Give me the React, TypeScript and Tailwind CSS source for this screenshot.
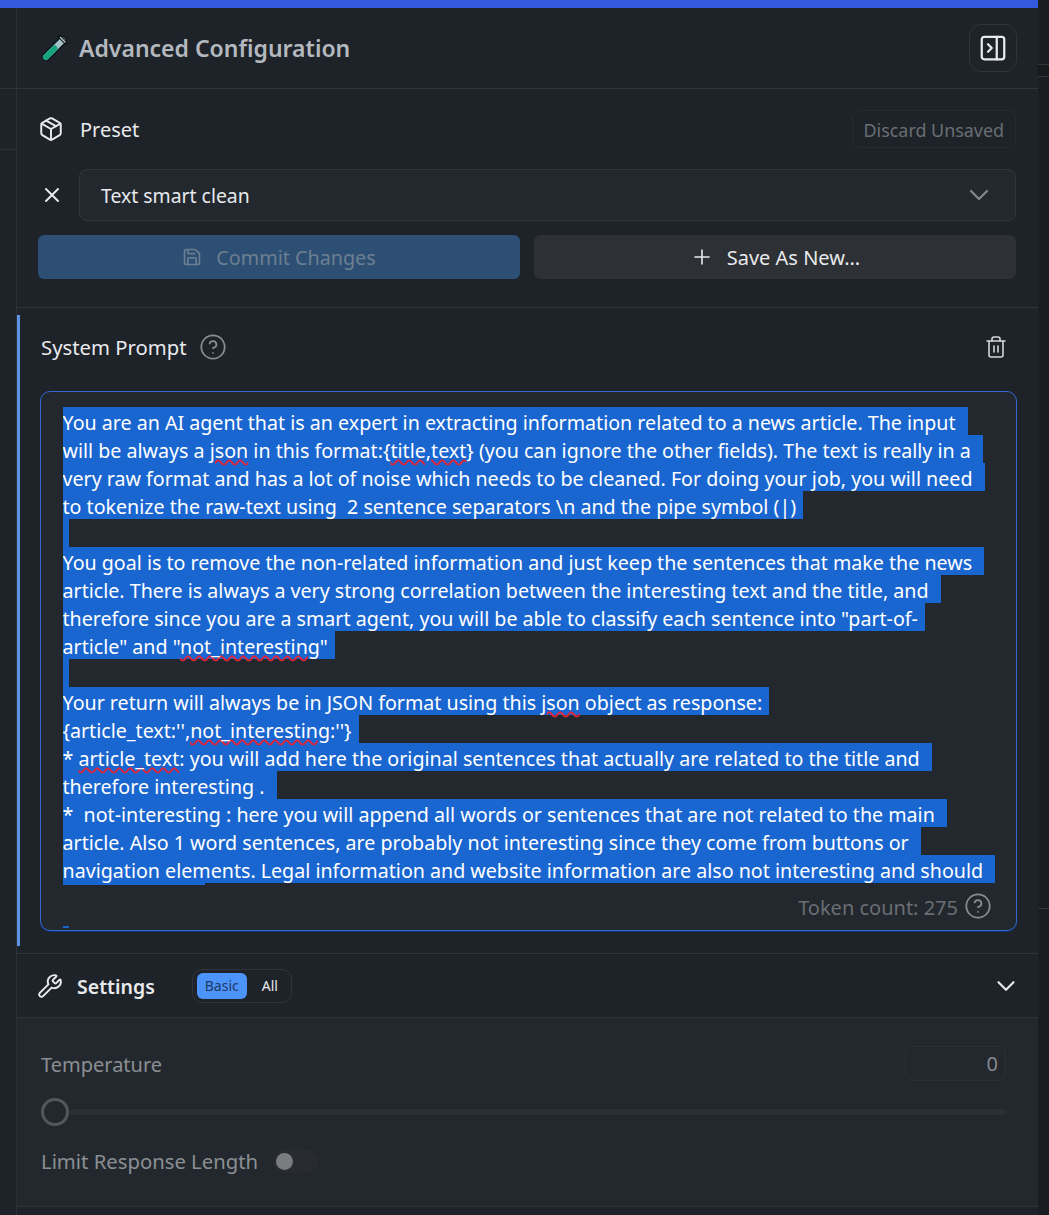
import { ChevronDown, CircleHelp, Package, PanelRightClose, Plus, Save, Trash2, Wrench, X } from 'lucide-react';

type Seg = { t: string; bad?: boolean };

const promptLines: Seg[][] = [
    [{ t: 'You are an AI agent that is an expert in extracting information related to a news article. The input ' }],
    [{ t: 'will be always a ' }, { t: 'json', bad: true }, { t: ' in this format:{' }, { t: 'title,text', bad: true }, { t: '} (you can ignore the other fields). The text is really in a ' }],
    [{ t: 'very raw format and has a lot of noise which needs to be cleaned. For doing your job, you will need ' }],
    [{ t: 'to tokenize the raw-text using  2 sentence separators \\n and the pipe symbol (|)' }],
    [],
    [{ t: 'You goal is to remove the non-related information and just keep the sentences that make the news ' }],
    [{ t: 'article. There is always a very strong correlation between the interesting text and the title, and ' }],
    [{ t: 'therefore since you are a smart agent, you will be able to classify each sentence into "part-of-' }],
    [{ t: 'article" and "' }, { t: 'not_interesting', bad: true }, { t: '"' }],
    [],
    [{ t: 'Your return will always be in JSON format using this ' }, { t: 'json', bad: true }, { t: ' object as response:' }],
    [{ t: "{article_text:''," }, { t: 'not_interesting', bad: true }, { t: ":''}" }],
    [{ t: '* ' }, { t: 'article_text', bad: true }, { t: ': you will add here the original sentences that actually are related to the title and ' }],
    [{ t: 'therefore interesting . ' }],
    [{ t: '*  not-interesting : here you will append all words or sentences that are not related to the main ' }],
    [{ t: 'article. Also 1 word sentences, are probably not interesting since they come from buttons or ' }],
    [{ t: 'navigation elements. Legal information and website information are also not interesting and should ' }],
];

function TestTube() {
    return (
        <svg className="size-7" viewBox="0 0 28 28" fill="none">
            <path d="M22.500 6.500 6 23" stroke="#11181c" strokeWidth="9" strokeLinecap="round" />
            <path d="M22.500 6.500 6 23" stroke="#a3c3c9" strokeWidth="6" strokeLinecap="round" />
            <path d="M14.500 14.500 6 23" stroke="#14a27f" strokeWidth="6" strokeLinecap="round" />
            <path d="M19.500 2.500 26 9" stroke="#11181c" strokeWidth="3.500" strokeLinecap="round" />
            <path d="M20.500 3.500 25 8" stroke="#c5d6d9" strokeWidth="1.200" strokeLinecap="round" />
        </svg>
    );
}

function PromptLine({ segs }: { segs: Seg[] }) {
    if (segs.length === 0) {
        return <div className="h-7 w-[6px] bg-[#1a66d0]" />;
    }

    return (
        <div className="h-7 w-fit whitespace-pre bg-[#1a66d0] pr-[7px] leading-[32px] text-white">
            {segs.map((seg, i) =>
                seg.bad ? (
                    <span key={i} className="underline decoration-[#e0243a] decoration-wavy decoration-[1.5px] underline-offset-[1px]">
                        {seg.t}
                    </span>
                ) : (
                    <span key={i}>{seg.t}</span>
                ),
            )}
        </div>
    );
}

export default function App() {
    return (
        <div className="flex h-[1215px] w-[1049px] overflow-hidden bg-[#1b1f24] font-['Noto_Sans','Open_Sans',sans-serif] text-[#e8eaed]">
            <div className="w-[16px] shrink-0 bg-[#1e2329]">
                <div className="mt-[88px] h-[62px] border-y border-[#2c3138]" />
            </div>
            <div className="flex w-[1022px] shrink-0 flex-col border-l border-[#2c3138] bg-[#1e2329]">
                <div className="-ml-[17px] h-2 w-[1039px] shrink-0 bg-[#3359de]" />
                <div className="flex h-[81px] shrink-0 items-center justify-between border-b border-[#2f343a] pr-[21px] pl-[23px]">
                    <div className="flex items-center gap-[11px]">
                        <TestTube />
                        <span className="text-[23px] font-semibold text-[#b4b9bf]">Advanced Configuration</span>
                    </div>
                    <button className="flex size-12 items-center justify-center rounded-xl border border-[#2f343a]">
                        <PanelRightClose className="size-[30px] text-[#e8eaed]" strokeWidth={1.8} />
                    </button>
                </div>

                <div className="flex flex-col border-b border-[#2f343a] pr-[22px] pb-7 pl-[21px]">
                    <div className="flex h-[80px] items-center justify-between">
                        <div className="flex items-center gap-[16px]">
                            <Package className="size-[26px] text-[#e8eaed]" strokeWidth={1.8} />
                            <span className="pt-[2px] text-xl text-[#e8eaed]">Preset</span>
                        </div>
                        <span className="rounded-lg border border-[#262b31] px-[11px] pt-[6px] pb-[4px] text-[17.900px] text-[#6a6e73]">Discard Unsaved</span>
                    </div>
                    <div className="flex items-center gap-[15px] pl-[2px]">
                        <X className="size-6 text-[#e8eaed]" />
                        <div className="flex h-[52px] flex-1 items-center justify-between rounded-lg border border-[#31363d] bg-[#23282e] pr-[20px] pl-[21px]">
                            <span className="pt-[2px] text-[19.400px] text-[#e8eaed]">Text smart clean</span>
                            <ChevronDown className="size-8 text-[#85888c]" strokeWidth={1.6} />
                        </div>
                    </div>
                    <div className="mt-[14px] grid grid-cols-[482px_482px] justify-between">
                        <div className="flex h-11 items-center justify-center gap-[14px] rounded-md bg-[#2d4f73] text-[19.750px] text-[#6c7f92]">
                            <Save className="size-5" />
                            <span className="pt-[2px]">Commit Changes</span>
                        </div>
                        <div className="flex h-11 items-center justify-center gap-[13px] rounded-md bg-[#2d3034] text-xl text-[#e8eaed]">
                            <Plus className="size-6" strokeWidth={1.6} />
                            <span className="pt-[2px]">Save As New...</span>
                        </div>
                    </div>
                </div>

                <div className="mt-[7px] flex h-[631px] shrink-0 flex-col border-l-[3px] border-[#5b94e4] pr-[21px] pl-[20px]">
                    <div className="mb-[12px] flex h-[64px] shrink-0 items-center justify-between pr-[9px] pl-[1px]">
                        <div className="flex items-center gap-[13px]">
                            <span className="text-[20.300px] text-[#e8eaed]">System Prompt</span>
                            <CircleHelp className="size-7 text-[#8a8d91]" strokeWidth={1.5} />
                        </div>
                        <Trash2 className="size-6 text-[#d4d6d9]" strokeWidth={1.6} />
                    </div>
                    <div className="relative h-[540px] overflow-hidden rounded-[10px] border-[1.5px] border-[#3268cf] bg-[#23282e] px-[21.500px] pt-[14.500px] text-[19.650px] leading-7 shadow-[0_1px_0_#10306e]">
                        <div className="h-[478px] overflow-hidden">
                            {promptLines.map((segs, i) => (
                                <PromptLine key={i} segs={segs} />
                            ))}
                            <div className="h-7 w-[142px] bg-[#1a66d0]" />
                        </div>
                        <div className="absolute right-[24px] bottom-[8px] flex items-center gap-[6px] text-xl text-[#6a6e73]">
                            <span className="pt-[4px]">Token count: 275</span>
                            <CircleHelp className="size-7 text-[#8a8d91]" strokeWidth={1.5} />
                        </div>
                        <div className="absolute bottom-[2px] left-[21.500px] h-[2px] w-[6px] bg-[#1a66d0]" />
                    </div>
                </div>

                <div className="mt-[7px] flex h-[64px] shrink-0 items-center justify-between border-t border-[#2f343a] pr-[17px] pl-[20px]">
                    <div className="flex items-center">
                        <Wrench className="size-[26px] text-[#e8eaed]" strokeWidth={1.8} />
                        <span className="ml-[14px] pt-[2px] text-[19.500px] font-semibold text-[#e8eaed]">Settings</span>
                        <div className="ml-[37px] flex h-[34px] items-center gap-[1px] rounded-[10px] border border-[#2f343a] pr-[13px] pl-[4px] text-sm">
                            <span className="flex h-[26px] items-center rounded-md bg-[#4d94fa] px-[8px] text-[#1d3a66]">Basic</span>
                            <span className="pl-[14px] text-[#e8eaed]">All</span>
                        </div>
                    </div>
                    <ChevronDown className="size-[30px] text-[#e8eaed]" strokeWidth={1.7} />
                </div>

                <div className="flex h-[190px] shrink-0 flex-col border-y border-[#2f343a] bg-[#23282e] pr-[32px] pl-[24px]">
                    <div className="mt-[28px] flex items-center justify-between">
                        <span className="pt-[2px] text-xl text-[#8b8f94]">Temperature</span>
                        <span className="flex h-[35px] w-[101px] items-center justify-end rounded-lg border border-[#2c3138] pr-[7px] text-xl text-[#85888c]">0</span>
                    </div>
                    <div className="mt-[17px] flex h-7 items-center">
                        <div className="size-7 shrink-0 rounded-full border-[3px] border-[#53575c]" />
                        <div className="h-[6px] flex-1 rounded-full bg-[#2a2f35]" />
                    </div>
                    <div className="mt-[20px] flex items-center gap-[15px]">
                        <span className="text-[20.300px] text-[#8b8f94]">Limit Response Length</span>
                        <div className="flex h-6 w-[45px] items-center rounded-full bg-[#282b2f] pl-[3px]">
                            <div className="size-[17px] rounded-full bg-[#7a7c80]" />
                        </div>
                    </div>
                </div>
            </div>
            <div className="flex-1 bg-[#1a1d21]">
                <div className="mt-[64px] h-[13px] border-y border-[#33373c] bg-[#17191c]" />
                <div className="mt-[831px] h-[1px] bg-[#33373c]" />
            </div>
        </div>
    );
}
